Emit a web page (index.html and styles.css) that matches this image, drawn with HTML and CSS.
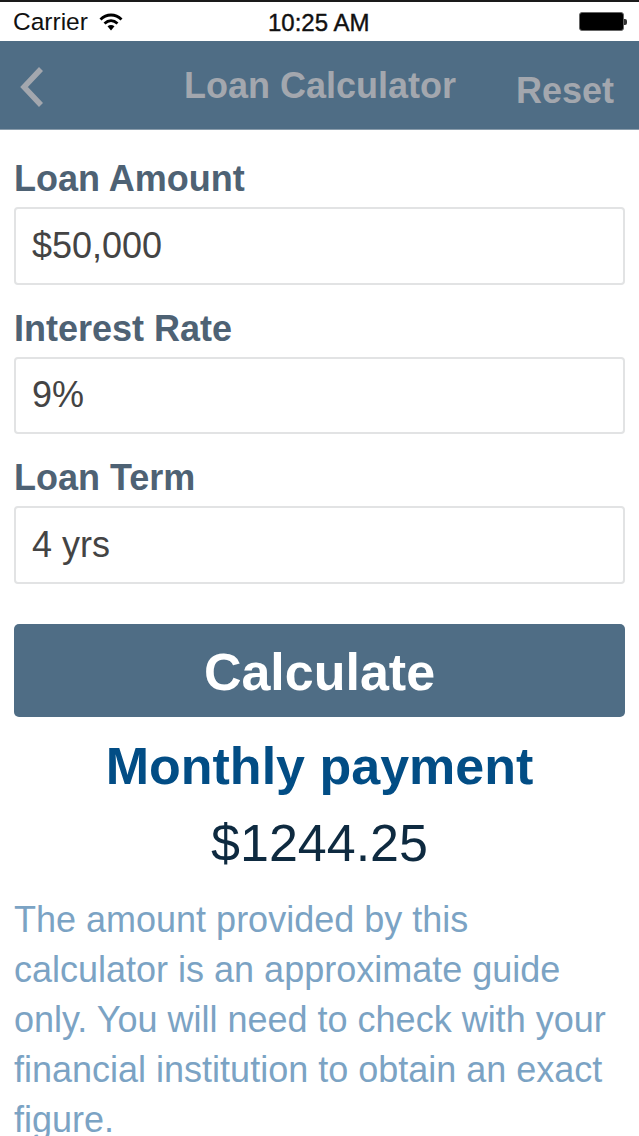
FILE: index.html
```html
<!DOCTYPE html>
<html lang="en">
<head>
    <meta charset="UTF-8">
    <meta name="viewport" content="width=device-width, initial-scale=1.0">
    <title>Loan Calculator</title>
    <link rel="stylesheet" href="styles.css">
</head>
<body>

    <div class="status-bar">
        <div class="status-left">
            <span>Carrier</span>
            <svg class="wifi" width="24" height="18" viewBox="0 0 24 18">
                <path d="M1.500 6.500C7.500 .500 16.500 .500 22.500 6.500" fill="none" stroke="#000" stroke-width="2.800"/>
                <path d="M5.500 10.500C9.500 6.800 14.500 6.800 18.500 10.500" fill="none" stroke="#000" stroke-width="2.800"/>
                <path d="M8.500 13.200C10.800 11.500 13.200 11.500 15.500 13.200L12 17.500Z" fill="#000"/>
            </svg>
        </div>
        <span class="status-time">10:25 AM</span>
        <div class="battery">
            <div class="battery-body"></div>
            <div class="battery-tip"></div>
        </div>
    </div>

    <div class="nav-bar">
        <svg class="back" width="28" height="42" viewBox="0 0 28 42">
            <path d="M23 3L6 21L23 39" fill="none" stroke="#a3a7ae" stroke-width="5.500"/>
        </svg>
        <span class="nav-title">Loan Calculator</span>
        <span class="nav-reset">Reset</span>
    </div>

    <form class="loan-form">
        <label for="amount">Loan Amount</label>
        <input type="text" id="amount" value="$50,000">

        <label for="rate">Interest Rate</label>
        <input type="text" id="rate" value="9%">

        <label for="term">Loan Term</label>
        <input type="text" id="term" value="4 yrs">

        <button type="button">Calculate</button>
    </form>

    <h2>Monthly payment</h2>
    <div class="payment">$1244.25</div>
    <p class="note">The amount provided by this calculator is an approximate guide only. You will need to check with your financial institution to obtain an exact figure.</p>

</body>
</html>
```

FILE: styles.css
```css
html, body {
    height: 1136px;
    overflow: hidden;
}

body {
    font-family: "Liberation Sans", Arial, sans-serif;
    margin: 0;
    background-color: #ffffff;
}

.status-bar {
    display: flex;
    justify-content: space-between;
    align-items: center;
    height: 39px;
    padding: 0 12px 0 13px;
    border-top: 2px solid #1a1a1a;
    font-size: 24.500px;
    color: #111111;
    position: relative;
}

.status-left {
    display: flex;
    align-items: center;
    gap: 11px;
}

.status-time {
    position: absolute;
    left: 268px;
    top: 7px;
    font-size: 24px;
    -webkit-text-stroke: 0.4px #111111;
}

.battery {
    display: flex;
    align-items: center;
}

.battery-body {
    width: 43px;
    height: 17px;
    background-color: #000000;
    border: 1px solid #666666;
    border-radius: 3px;
}

.battery-tip {
    width: 3px;
    height: 6px;
    background-color: #333333;
    border-radius: 0 2px 2px 0;
}

.nav-bar {
    display: flex;
    align-items: center;
    height: 89px;
    background-color: #4f6d85;
    border-bottom: 1px solid #8a9cab;
    box-sizing: border-box;
    padding: 0 25px 0 18px;
    font-weight: bold;
    color: #a3a7ae;
}

.back {
    margin-top: 4px;
}

.nav-title {
    font-size: 36px;
    margin-left: 138px;
    margin-top: 2px;
}

.nav-reset {
    font-size: 36px;
    margin-left: auto;
    margin-top: 12px;
}

.loan-form {
    display: flex;
    flex-direction: column;
    padding: 0 14px;
}

label {
    display: block;
    font-size: 36px;
    font-weight: bold;
    color: #4e6274;
    line-height: 40px;
    margin: 0 0 8px;
}

label:first-child {
    margin-top: 29px;
}

input {
    height: 77.500px;
    box-sizing: border-box;
    padding: 0 16px;
    border: 2px solid #e2e3e4;
    border-radius: 4px;
    font-family: inherit;
    font-size: 36px;
    color: #444444;
    background-color: #ffffff;
}

input + label {
    margin-top: 24px;
}

button {
    height: 93px;
    margin-top: 40.500px;
    padding: 2px 0 0;
    background-color: #4f6d85;
    color: white;
    border: none;
    border-radius: 5px;
    font-family: inherit;
    font-size: 52px;
    font-weight: bold;
}

h2 {
    margin: 20px 0 0;
    text-align: center;
    font-size: 52px;
    line-height: 58px;
    color: #024d85;
}

.payment {
    margin-top: 21px;
    text-align: center;
    font-size: 52px;
    line-height: 54px;
    color: #0e2a40;
}

.note {
    margin: 25px 0 0;
    padding: 0 14px;
    font-size: 36px;
    line-height: 50px;
    color: #7ba3c4;
}
```
